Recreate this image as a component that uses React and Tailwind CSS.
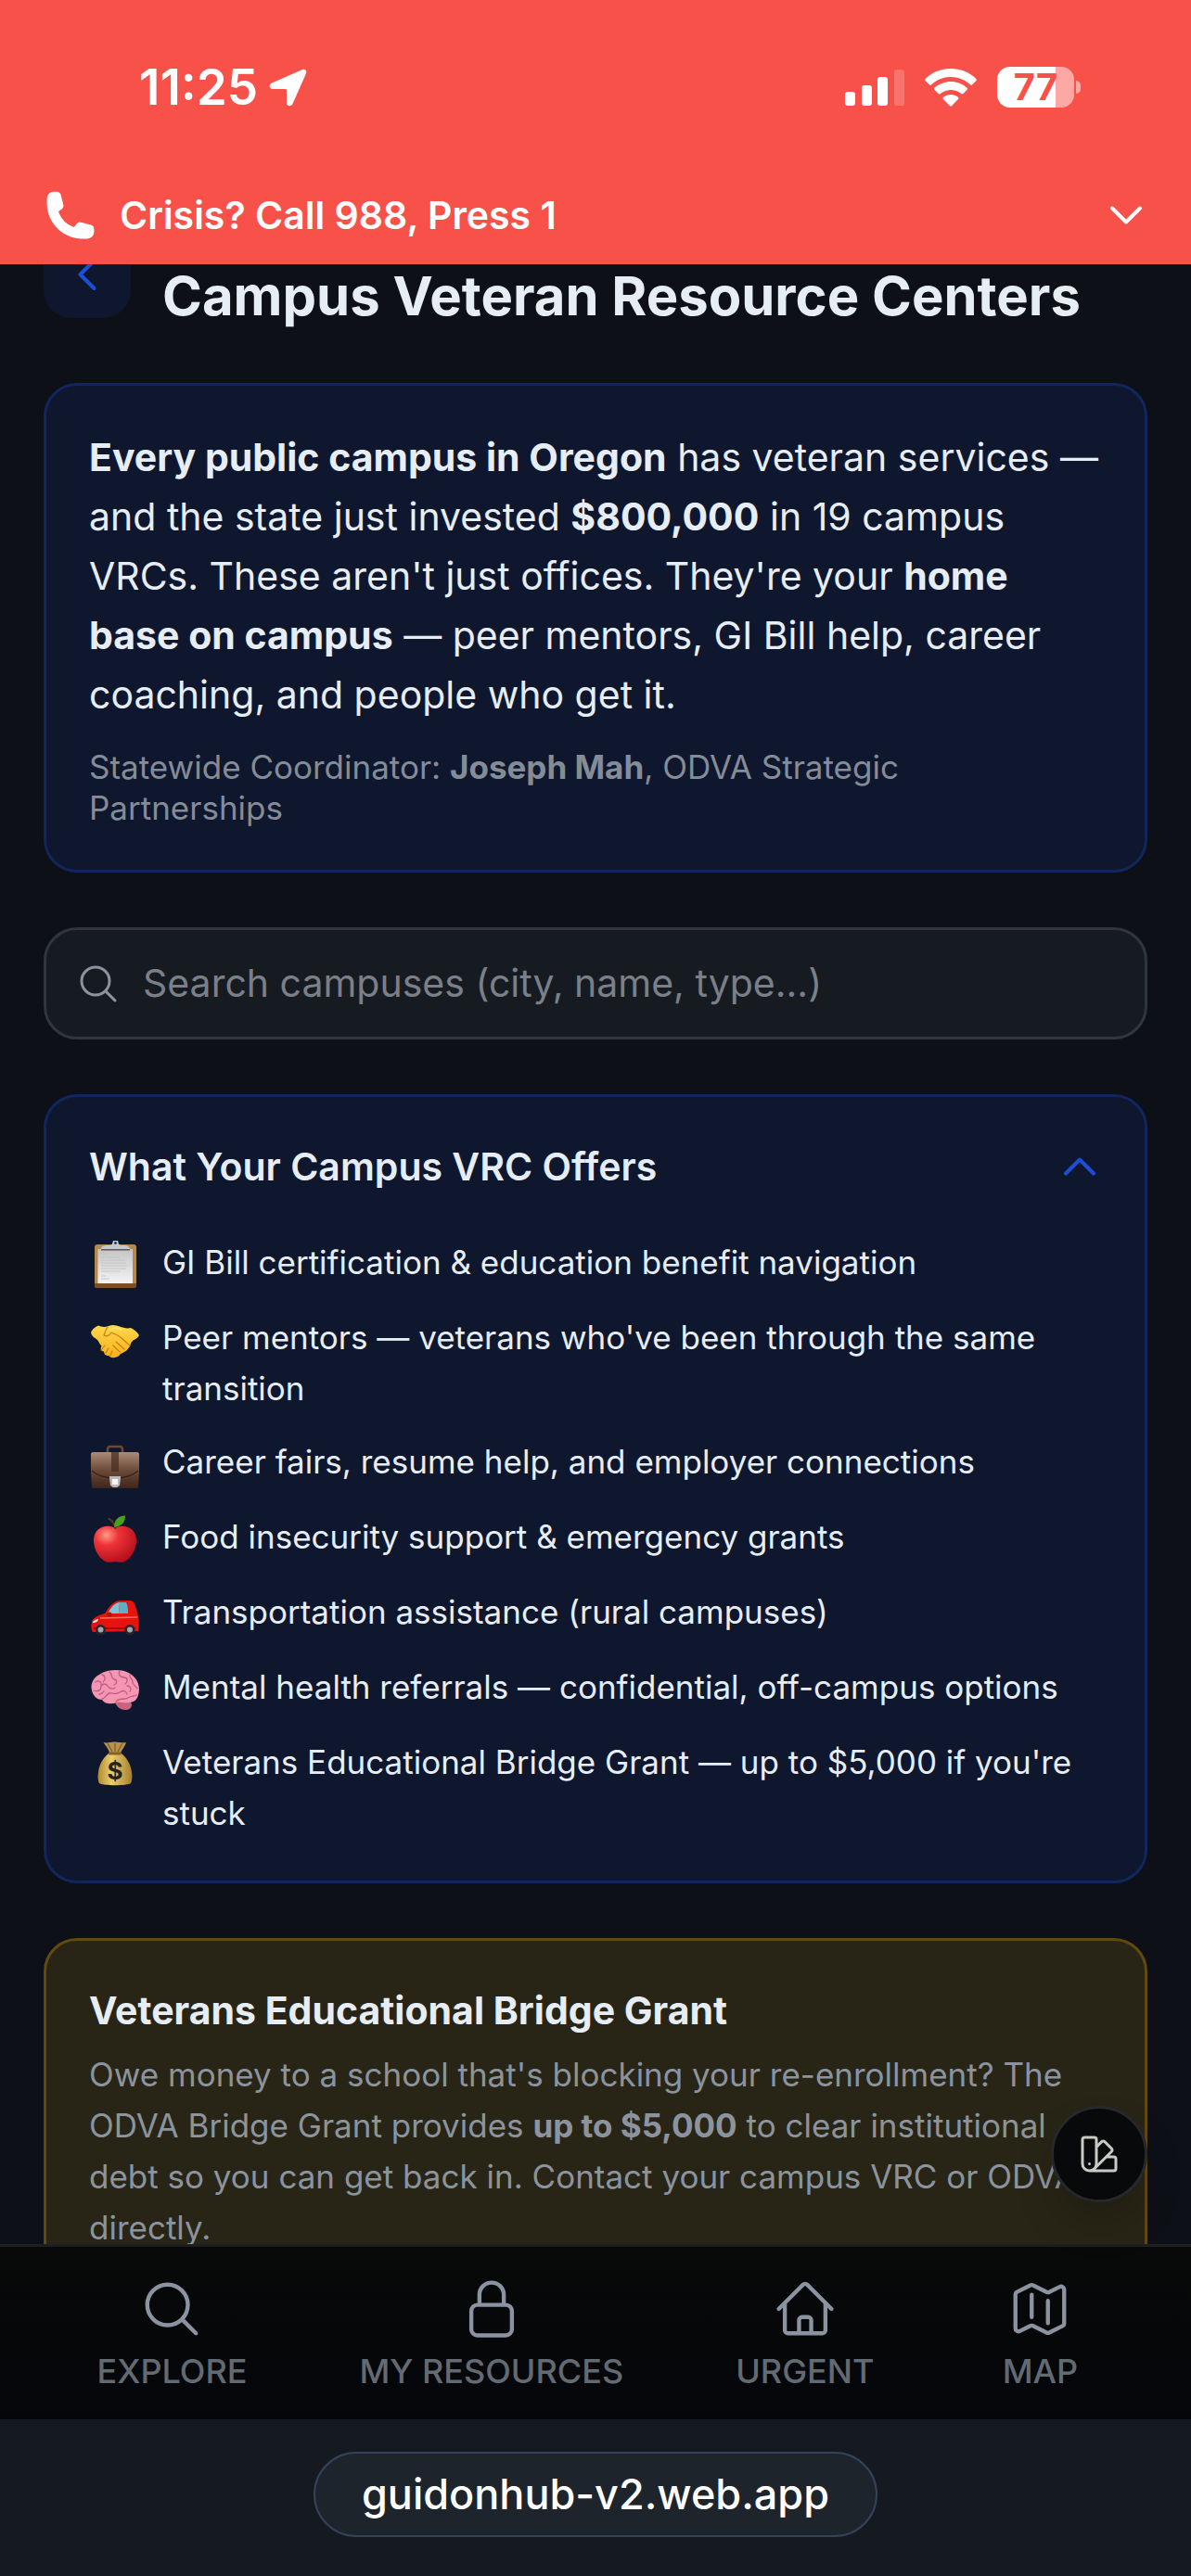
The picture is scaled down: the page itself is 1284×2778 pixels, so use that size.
import { useState } from "react";
import {
  HiOutlineMagnifyingGlass,
  HiOutlineLockClosed,
  HiOutlineHome,
  HiOutlineMap,
  HiOutlineSwatch,
  HiOutlineChevronDown,
  HiOutlineChevronUp,
  HiOutlineChevronLeft,
  HiPhone,
} from "react-icons/hi2";

const ClipboardIcon = () => (
  <svg viewBox="0 0 52 52" className="size-13" aria-hidden="true">
    <defs>
      <linearGradient id="paper" x1="0" y1="0" x2="0" y2="1">
        <stop offset="0" stopColor="#c4c4c6" />
        <stop offset="1" stopColor="#f4f4f4" />
      </linearGradient>
    </defs>
    <rect x="4" y="4" width="45" height="47" rx="3" fill="#b58a50" />
    <path d="M4 46h45v2a3 3 0 0 1-3 3H7a3 3 0 0 1-3-3z" fill="#7a4f22" />
    <rect x="7.500" y="9" width="37.500" height="37" fill="url(#paper)" />
    <path d="M11 14h6M11 18h20M11 21h26M11 24h27M11 27h28M11 30h27M11 33h20M11 38h5M11 41h9" stroke="#c2c2c4" strokeWidth=".8" />
    <path d="M11 9c0-4 5-4 9-4 2 0 3-1 3.500-3a3 3 0 0 1 6 0c.5 2 1.500 3 3.500 3 4 0 9 0 9 4z" fill="#c3c9d2" />
    <circle cx="26.500" cy="2.500" r="1.300" fill="#0f172e" />
    <path d="M11 9h31v1.500H11z" fill="#635750" />
  </svg>
);

const HandshakeIcon = () => (
  <svg viewBox="0 0 52 52" className="size-13" aria-hidden="true">
    <defs>
      <linearGradient id="skin" x1="0" y1="0" x2="0" y2="1">
        <stop offset="0" stopColor="#ffd84a" />
        <stop offset="1" stopColor="#f5b01c" />
      </linearGradient>
    </defs>
    <path
      d="M0 18c1-3 4-6 8-7.500 3 1.500 7 2 11 .5 4-1.500 8-1 12 .5 4 1.500 8 2.500 12 1.500 3.500 1.500 7 4.500 9 8-1.500 3-4 4-6.500 5.500-3.500 3-2.500 6.500-5.500 9-2 3-5 4-8 5.500-1.500 2.500-3.500 3.500-6.500 4-3 .5-5-.5-6.500-2-3 0-5-1.500-5-4.500-3.500-.5-4-3-2.500-6-2.500-2.500-3-5-5-7-2.500-2-5.500-3-6.500-7.500z"
      fill="url(#skin)"
    />
    <path d="M18 12c-2 3-3 6-4 9 3 2 6 0 8-3 4 2 8 3 11 6l9 8M27 28l9 8M24 32l7 7M15 32l-4 5M19 35l-3 5M23 38l-2 5" fill="none" stroke="#c87f14" strokeWidth="1.200" strokeLinecap="round" />
    <path d="M21 15c4-3 8-2 12 0" fill="none" stroke="#ffe680" strokeWidth="1.500" strokeLinecap="round" />
  </svg>
);

const BriefcaseIcon = () => (
  <svg viewBox="0 0 52 52" className="size-13" aria-hidden="true">
    <defs>
      <linearGradient id="leather" x1="0" y1="0" x2="0" y2="1">
        <stop offset="0" stopColor="#a98c78" />
        <stop offset=".5" stopColor="#6d4a39" />
        <stop offset="1" stopColor="#3e251c" />
      </linearGradient>
    </defs>
    <path d="M18 14v-4c0-2 1-3 3-3h10c2 0 3 1 3 3v4" fill="none" stroke="#6b4634" strokeWidth="2.500" />
    <path d="M0 15c0-1 1-2 2-2h48c1 0 2 1 2 2v19l-1 16c0 1-1 2-2 2H3c-1 0-2-1-2-2L0 34z" fill="url(#leather)" />
    <path d="M1 33c7 6 16 8 25 8s18-2 25-8" fill="none" stroke="#3a221a" strokeWidth="1.200" />
    <path d="M22 13h8v21h-8z" fill="#4a2d20" opacity=".75" />
    <path d="M20 39h12v2l-1 8-3 2h-4l-3-2-1-8z" fill="#b9b9b9" />
    <path d="M23 42h6v6h-6z" fill="#f5f5f5" />
  </svg>
);

const AppleIcon = () => (
  <svg viewBox="0 0 52 52" className="size-13" aria-hidden="true">
    <defs>
      <radialGradient id="apple" cx=".3" cy=".25" r=".8">
        <stop offset="0" stopColor="#ff9a86" />
        <stop offset=".35" stopColor="#ee3338" />
        <stop offset="1" stopColor="#b50f1c" />
      </radialGradient>
    </defs>
    <path d="M26 14c4-2.500 9-3 14-1 6 2 9.500 8 9 16-1 10-7 19-14 21.500-3 1-6-.5-9-.5s-6 1.500-9 .5C10 48 4 39 3 29c-.5-8 3-14 9-16 5-2 10-1.500 14 1z" fill="url(#apple)" />
    <path d="M26.500 14c-1-4-3-8-7-10" fill="none" stroke="#5b3320" strokeWidth="2" strokeLinecap="round" />
    <path d="M25 13c0-8 4-12 12-12.500C37 8 33 12 25 13z" fill="#4a9f1e" />
  </svg>
);

const CarIcon = () => (
  <svg viewBox="0 0 52 52" className="size-13" aria-hidden="true">
    <path d="M1 34c1-4 6-7 14-9 5-8 9-13 16-14h10c4 0 6 2 7 6l3 11c1 3 1 12 0 16l-49 1c-2-3-2-7-1-11z" fill="#e8130f" />
    <path d="M18 25c4-7 7-11 13-12l-1 12z" fill="#7cc4d4" />
    <path d="M31 13h7c2 4 2 8 2 12H30z" fill="#5fb0c4" />
    <path d="M2 34c2-2 4-3 6-3 0 2-2 4-6 4z" fill="#dfe5e8" />
    <path d="M10 30l40-1" stroke="#ff6a55" strokeWidth="1.500" />
    <path d="M3 41h45" stroke="#8c0808" strokeWidth="1.500" />
    <circle cx="20" cy="26" r="2.500" fill="#b70d0c" />
    <circle cx="10.500" cy="42.500" r="5.500" fill="#25272b" />
    <circle cx="10.500" cy="42.500" r="3" fill="#a4a7ab" />
    <circle cx="42" cy="42.500" r="5.500" fill="#25272b" />
    <circle cx="42" cy="42.500" r="3" fill="#a4a7ab" />
  </svg>
);

const BrainIcon = () => (
  <svg viewBox="0 0 52 52" className="size-13" aria-hidden="true">
    <path d="M26 40c2 5 6 8 11 8 4 0 7-2 7-6l-2-5z" fill="#c9627d" />
    <path d="M1 27C-1 20 3 13 9 10c5-4 12-5 19-5 8 0 15 3 19 8 5 5 6 13 4 19-1 5-5 8-10 8-5 1-9-1-13 0-6 2-13 2-16-3C6 37 2 32 1 27z" fill="#f596b4" />
    <path
      d="M5 18c4-3 7 1 6 4M12 10c4 1 4 6 1 8M20 7c4 3 1 7 5 8s3 5 0 6M3 27c5 2 8-1 8-4s5-4 7-1 5 4 8 2M12 36c4 0 4-5 8-6s7 2 11-1 7-1 8 2M31 6c-2 4 1 7 5 7s4 5 1 7M42 10c-1 4 3 4 3 8s4 4 5 7M27 39c4-5 9-1 13-4s6-1 9-3M9 31c3 0 4-2 5-3M39 22c4 0 5 4 3 6"
      fill="none"
      stroke="#c45a80"
      strokeWidth="1.300"
      strokeLinecap="round"
    />
  </svg>
);

const MoneyBagIcon = () => (
  <svg viewBox="0 0 52 52" className="size-13" aria-hidden="true">
    <defs>
      <linearGradient id="bag" x1="0" y1="0" x2="1" y2="0">
        <stop offset="0" stopColor="#b08a35" />
        <stop offset=".4" stopColor="#eccf6c" />
        <stop offset="1" stopColor="#a77f2c" />
      </linearGradient>
    </defs>
    <path d="M13.500 2c4 1 7 0 11-.5C29 1 34 3 38 2c-1 4-4 7-6 11H20c-1-4-4-7-6.500-11z" fill="#b8924a" />
    <path d="M18 3l5 9M26 3v9M34 3l-5 9" stroke="#7d5c25" strokeWidth="1.200" />
    <path d="M19 14h14c5 4 10 11 11 20 1 6 0 10-1 12-3 3-31 3-34 0-1-2-2-6-1-12 1-9 6-16 11-20z" fill="url(#bag)" />
    <rect x="19" y="12.500" width="14" height="3" rx="1" fill="#856328" />
    <text x="26" y="42" textAnchor="middle" fontSize="26" fontWeight="700" fill="#26221c" fontFamily="Inter, sans-serif">
      $
    </text>
  </svg>
);

const offers = [
  { icon: ClipboardIcon, text: "GI Bill certification & education benefit navigation" },
  { icon: HandshakeIcon, text: "Peer mentors — veterans who've been through the same transition" },
  { icon: BriefcaseIcon, text: "Career fairs, resume help, and employer connections" },
  { icon: AppleIcon, text: "Food insecurity support & emergency grants" },
  { icon: CarIcon, text: "Transportation assistance (rural campuses)" },
  { icon: BrainIcon, text: "Mental health referrals — confidential, off-campus options" },
  { icon: MoneyBagIcon, text: "Veterans Educational Bridge Grant — up to $5,000 if you're stuck" },
];

const tabs = [
  { icon: HiOutlineMagnifyingGlass, label: "EXPLORE" },
  { icon: HiOutlineLockClosed, label: "MY RESOURCES" },
  { icon: HiOutlineHome, label: "URGENT" },
  { icon: HiOutlineMap, label: "MAP" },
];

function StatusBar() {
  return (
    <div className="flex items-center justify-between pt-16 pr-[119px] pl-[150px]">
      <div className="flex items-center gap-3">
        <span className="text-[53px] leading-[60px] font-semibold">11:25</span>
        <svg viewBox="0 0 41 41" className="size-[41px]" fill="currentColor" aria-hidden="true">
          <path d="M35.500 1.200c3-1.400 5.600.8 4.500 4L25.500 38c-1.300 3.200-6.500 2.800-6.500-1V23.500c0-1-.5-1.500-1.500-1.500H4c-4 0-4.500-4.800-1-6.500z" />
        </svg>
      </div>
      <div className="flex items-center gap-[22px]">
        <svg viewBox="0 0 64 41" className="h-[41px] w-16" fill="currentColor" aria-hidden="true">
          <rect x="0" y="25" width="11" height="15" rx="3" />
          <rect x="18" y="18" width="11" height="22" rx="3" />
          <rect x="35" y="9" width="11" height="31" rx="3" />
          <rect x="53" y="1" width="11" height="39" rx="3" opacity=".2" />
        </svg>
        <svg viewBox="0 0 56 41" className="h-[41px] w-14" fill="currentColor" aria-hidden="true">
          <path d="M28 0C17.500 0 8 4 .8 10.700c-.8.800-.8 1.700 0 2.500l4 4c.7.700 1.500.7 2.300 0C12.800 12 20 9 28 9s15.200 3 20.900 8.200c.8.700 1.600.7 2.300 0l4-4c.8-.8.8-1.700 0-2.500C48 4 38.500 0 28 0z" />
          <path d="M28 14c-6.700 0-12.800 2.500-17.400 6.600-.8.700-.8 1.600 0 2.400l4 4c.7.700 1.500.7 2.300.1C19.900 24.400 23.800 23 28 23s8.100 1.400 11.100 4.100c.8.600 1.600.6 2.300-.1l4-4c.8-.8.8-1.700 0-2.400C40.800 16.500 34.700 14 28 14z" />
          <path d="M28 28c-3 0-5.600 1-7.800 2.700-.9.700-.9 1.600-.1 2.400l6.700 6.800c.8.800 1.600.8 2.400 0l6.700-6.800c.8-.8.8-1.700-.1-2.400C33.600 29 31 28 28 28z" />
        </svg>
        <div className="flex items-center gap-[2px]">
          <div className="flex h-11 w-[83px] items-center justify-center rounded-[14px] bg-linear-to-r from-white from-76% to-[#fca8a4] to-76% text-[40px] leading-none font-bold text-[#f85149]">
            77
          </div>
          <div className="h-[14px] w-[5px] rounded-r-full bg-[#fca8a4]" />
        </div>
      </div>
    </div>
  );
}

function App() {
  const [query, setQuery] = useState("");
  const [offersOpen, setOffersOpen] = useState(true);

  return (
    <div className="relative flex h-screen flex-col overflow-hidden bg-[#0d1117] font-['Inter',sans-serif] text-[#e6edf5]">
      {/* Crisis bar */}
      <header className="z-10 bg-[#f85149] text-white">
        <StatusBar />
        <button className="mt-[78px] flex w-full items-center gap-6 pr-[46px] pb-[23px] pl-[47px] text-left">
          <HiPhone className="size-[58px]" />
          <span className="flex-1 text-[41px] leading-[60px] font-semibold">Crisis? Call 988, Press 1</span>
          <HiOutlineChevronDown strokeWidth={2} className="size-12" />
        </button>
      </header>

      <main className="min-h-0 flex-1 px-[47px]">
        <div className="-mt-9 flex items-end gap-[34px]">
          <button
            aria-label="Back"
            className="flex size-[94px] items-center justify-center rounded-[30px] bg-[#0f172e] text-[#1d4ed8]"
          >
            <HiOutlineChevronLeft strokeWidth={2} className="size-12" />
          </button>
          <h1 className="text-[58px] leading-12 font-bold">Campus Veteran Resource Centers</h1>
        </div>

        <section className="mt-[70px] rounded-[36px] border-3 border-[#12265e] bg-[#0f172e] px-[46px] py-[45px]">
          <p className="text-[41px] leading-16">
            <strong>Every public campus in Oregon</strong> has veteran services — and the state just invested{" "}
            <strong>$800,000</strong> in 19 campus VRCs. These aren't just offices. They're your{" "}
            <strong>home base on campus</strong> — peer mentors, GI Bill help, career coaching, and people who get it.
          </p>
          <p className="mt-6 pr-6 text-[35px] leading-11 text-[#848d97]">
            Statewide Coordinator: <strong>Joseph Mah</strong>, ODVA Strategic Partnerships
          </p>
        </section>

        <label className="mt-[59px] flex h-[121px] items-center gap-6 rounded-[36px] border-3 border-[#30363d] bg-[#161b22] px-8">
          <HiOutlineMagnifyingGlass className="size-12 text-[#8b949e]" />
          <input
            type="text"
            value={query}
            onChange={(e) => setQuery(e.target.value)}
            aria-label="Search campuses"
            placeholder="Search campuses (city, name, type...)"
            className="min-w-0 flex-1 bg-transparent text-[41px] outline-none placeholder:text-[#7b7f88]"
          />
        </label>

        {/* What the campus VRC offers */}
        <section className="mt-[59px] rounded-[36px] border-3 border-[#12265e] bg-[#0f172e] px-[46px] py-[45px]">
          <button
            onClick={() => setOffersOpen(!offersOpen)}
            aria-expanded={offersOpen}
            className="flex w-full items-center justify-between text-left"
          >
            <h2 className="text-[41px] leading-[60px] font-semibold">What Your Campus VRC Offers</h2>
            {offersOpen ? (
              <HiOutlineChevronUp strokeWidth={2} className="size-12 text-[#1d4ed8]" />
            ) : (
              <HiOutlineChevronDown strokeWidth={2} className="size-12 text-[#1d4ed8]" />
            )}
          </button>
          {offersOpen && (
            <ul className="mt-[46px] flex flex-col gap-6">
              {offers.map(({ icon: Icon, text }) => (
                <li key={text} className="flex items-start gap-6 text-[35px] leading-[55px]">
                  <span className="flex h-[57px] w-[55px] shrink-0 justify-center pt-1">
                    <Icon />
                  </span>
                  <span>{text}</span>
                </li>
              ))}
            </ul>
          )}
        </section>

        <section className="mt-[59px] rounded-[36px] border-3 border-[#624910] bg-[#282516] px-[46px] py-[45px]">
          <h2 className="text-[41px] leading-[60px] font-bold">Veterans Educational Bridge Grant</h2>
          <p className="mt-3 text-[35px] leading-[55px] text-[#8b949e]">
            Owe money to a school that's blocking your re-enrollment? The ODVA Bridge Grant provides{" "}
            <strong>up to $5,000</strong> to clear institutional debt so you can get back in. Contact your campus VRC or
            ODVA directly.
          </p>
        </section>
      </main>

      <div className="relative z-10">
        <button
          aria-label="Change theme"
          className="absolute -top-[149px] right-[47px] flex size-[104px] items-center justify-center rounded-full border-3 border-[#26282b] bg-[#08090b] text-[#c9c9c6] shadow-2xl"
        >
          <HiOutlineSwatch className="size-12" />
        </button>

        <nav className="flex justify-around border-t-3 border-[#1e1f20] bg-linear-to-b from-[#080908] to-[#04060a] px-11 pt-8 pb-7">
          {tabs.map(({ icon: Icon, label }) => (
            <button key={label} className="flex min-w-[116px] flex-col items-center gap-2 font-medium text-[#8b93a1]">
              <Icon className="size-[70px]" />
              <span className="text-[36px] leading-12 text-[#636a72]">{label}</span>
            </button>
          ))}
        </nav>

        {/* Browser address pill */}
        <footer className="flex justify-center bg-[#151920] pt-[35px] pb-[42px]">
          <div className="rounded-full border-2 border-[#33435a] bg-[#1e242c] px-[50px] text-[45px] leading-[88px] font-medium text-white">
            guidonhub-v2.web.app
          </div>
        </footer>
      </div>
    </div>
  );
}

export default App;
